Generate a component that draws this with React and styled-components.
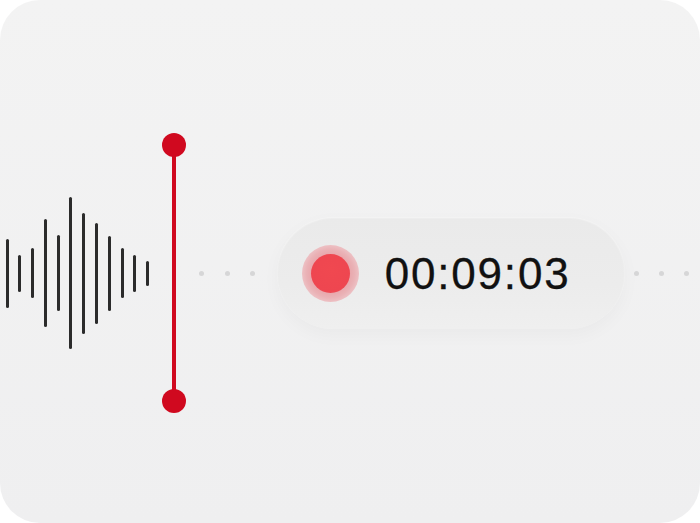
import React from "react";
import styled, { createGlobalStyle } from "styled-components";

const Global = createGlobalStyle`
  html, body { margin: 0; padding: 0; background: #ffffff; }
  body { font-family: "Liberation Sans", Arial, sans-serif; }
`;

const Card = styled.div`
  width: 700px;
  height: 523px;
  box-sizing: border-box;
  padding-top: 23px;
  border-radius: 40px;
  background: linear-gradient(180deg, #f3f3f3 0%, #efeff0 100%);
  display: flex;
  align-items: center;
  overflow: hidden;
`;

const Waveform = styled.div`
  display: flex;
  align-items: center;
  gap: 9.8px;
  margin-left: 5.5px;
`;

const Bar = styled.div`
  width: 3px;
  border-radius: 1.5px;
  background: #2b2b2b;
`;

const Playhead = styled.div`
  margin-left: 12.5px;
  width: 24px;
  height: 280px;
  display: flex;
  flex-direction: column;
  align-items: center;
`;

const Knob = styled.div`
  width: 24px;
  height: 24px;
  border-radius: 50%;
  background: #d0091f;
  flex: none;
`;

const Line = styled.div`
  width: 4px;
  flex: 1;
  margin: -2px 0;
  background: #d0091f;
`;

const Dots = styled.div`
  display: flex;
  gap: ${(p) => p.$gap}px;
  margin-left: ${(p) => p.$ml}px;
`;

const Dot = styled.div`
  width: 5px;
  height: 5px;
  border-radius: 50%;
  background: #d6d6d7;
`;

const Pill = styled.div`
  margin-left: 21.5px;
  width: 348px;
  height: 112px;
  box-sizing: border-box;
  border-radius: 56px;
  background: linear-gradient(180deg, #eaeaea 0%, #ececec 60%, #efefef 100%);
  box-shadow: 0 6px 18px rgba(0, 0, 0, 0.03), inset 0 1px 2px rgba(255, 255, 255, 0.6);
  display: flex;
  align-items: center;
  padding-left: 25.5px;
  flex: none;
`;

const RecordOuter = styled.div`
  width: 57px;
  height: 57px;
  border-radius: 50%;
  background: radial-gradient(circle, #e27e86 0%, #eab2b6 60%, #f2d8da 88%, #e9cfd1 100%);
  display: flex;
  align-items: center;
  justify-content: center;
  flex: none;
`;

const RecordInner = styled.div`
  width: 39px;
  height: 39px;
  border-radius: 50%;
  background: radial-gradient(circle at 50% 40%, #f04850 0%, #ee4650 70%, #ea5a62 100%);
`;

const Time = styled.div`
  margin-left: 25.5px;
  font-family: "Liberation Sans", Arial, sans-serif;
  font-size: 44px;
  letter-spacing: 1.8px;
  color: #111111;
  line-height: 1;
  margin-top: 1px;
  -webkit-text-stroke: 0.3px #111111;
`;

const bars = [69, 37, 50, 108, 76, 152, 121, 101, 75, 50, 37, 25];

export default function App() {
  return (
    <>
      <Global />
      <Card>
        <Waveform>
          {bars.map((h, i) => (
            <Bar key={i} style={{ height: h }} />
          ))}
        </Waveform>
        <Playhead>
          <Knob />
          <Line />
          <Knob />
        </Playhead>
        <Dots $gap={20.5} $ml={13.5}>
          <Dot />
          <Dot />
          <Dot />
        </Dots>
        <Pill>
          <RecordOuter>
            <RecordInner />
          </RecordOuter>
          <Time>00:09:03</Time>
        </Pill>
        <Dots $gap={20} $ml={9.5}>
          <Dot />
          <Dot />
          <Dot />
        </Dots>
      </Card>
    </>
  );
}
